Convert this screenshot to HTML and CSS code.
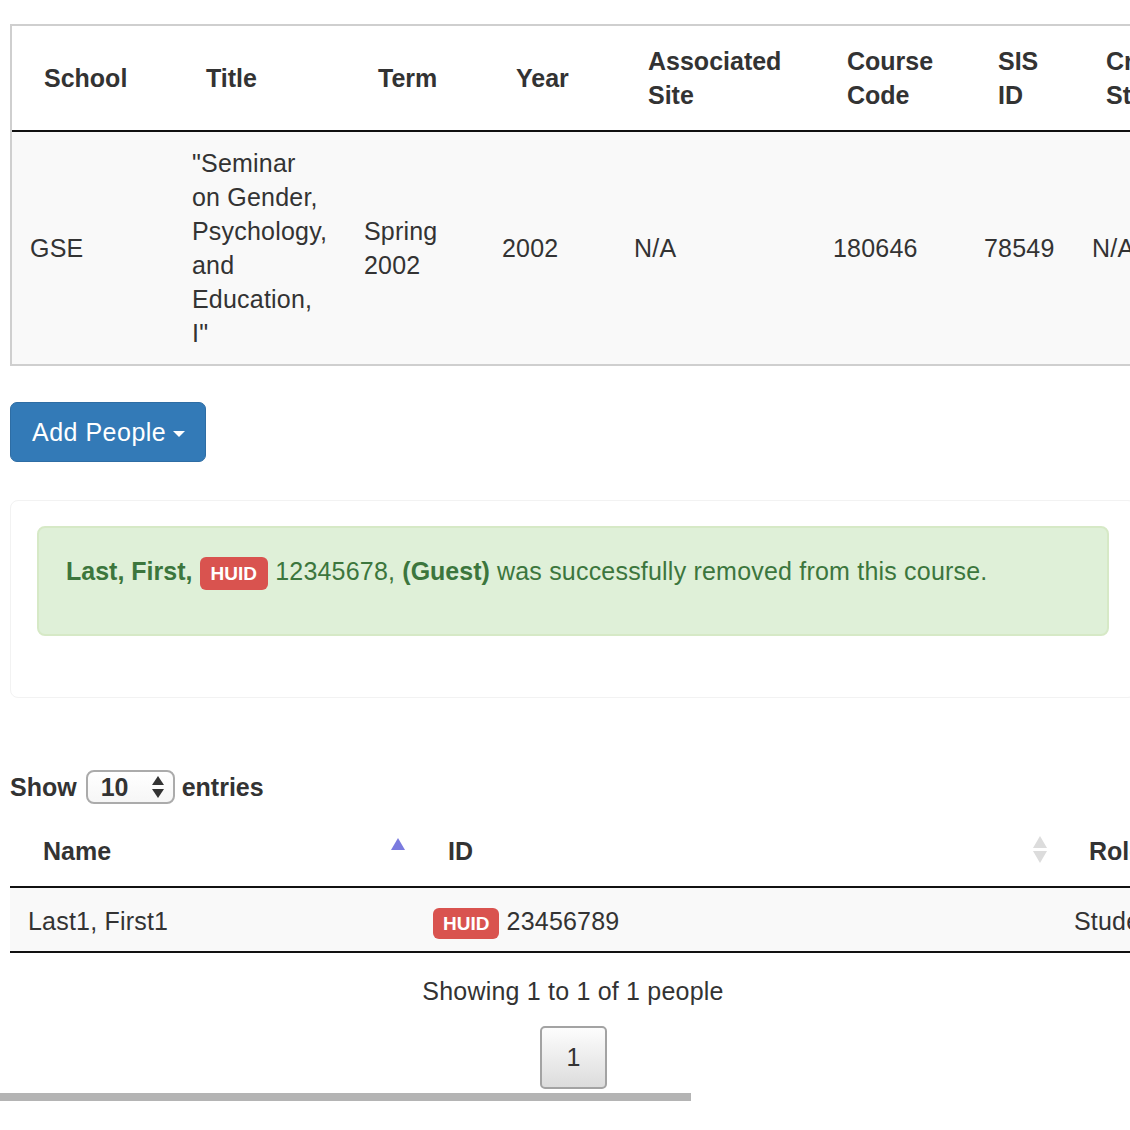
FILE: index.html
```html
<!DOCTYPE html>
<html lang="en">
<head>
<meta charset="utf-8">
<title>Course people</title>
<link rel="stylesheet" href="styles.css">
</head>
<body>
<div class="page">
  <table class="course-table">
    <colgroup>
      <col class="c-school"><col class="c-title"><col class="c-term"><col class="c-year"><col class="c-site"><col class="c-code"><col class="c-sis"><col class="c-cross">
    </colgroup>
    <thead>
      <tr>
        <th>School</th><th>Title</th><th>Term</th><th>Year</th><th>Associated Site</th><th>Course Code</th><th>SIS ID</th><th>Crosslist Status</th>
      </tr>
    </thead>
    <tbody>
      <tr>
        <td>GSE</td>
        <td class="title-cell">"Seminar on Gender, Psychology, and Education, I"</td>
        <td>Spring 2002</td>
        <td>2002</td>
        <td>N/A</td>
        <td>180646</td>
        <td>78549</td>
        <td>N/A</td>
      </tr>
    </tbody>
  </table>

  <div class="actions">
    <button class="btn-add" type="button">Add People <span class="caret"></span></button>
  </div>

  <div class="panel">
    <div class="alert">
      <p><b>Last, First,</b> <span class="badge">HUID</span> 12345678, <b>(Guest)</b> was successfully removed from this course.</p>
    </div>
  </div>

  <div class="length">
    <b>Show</b>
    <span class="select"><span class="select-val">10</span>
      <svg class="select-arrows" width="12" height="22" viewBox="0 0 12 22"><path d="M6 0 L12 9 H0 Z" fill="#333"/><path d="M0 13 H12 L6 22 Z" fill="#333"/></svg>
    </span>
    <b class="entries">entries</b>
  </div>

  <table class="people">
    <colgroup><col class="p-name"><col class="p-id"><col class="p-role"></colgroup>
    <thead>
      <tr>
        <th class="sortable">Name
          <svg class="sort-icon asc" width="14" height="12" viewBox="0 0 14 12"><path d="M7 0 L14 12 H0 Z" fill="#7b7bdf"/></svg>
        </th>
        <th class="sortable">ID
          <svg class="sort-icon both" width="14" height="28" viewBox="0 0 14 28"><path d="M7 0 L14 12 H0 Z" fill="#dcdcdc"/><path d="M0 15 H14 L7 27 Z" fill="#dcdcdc"/></svg>
        </th>
        <th>Role</th>
      </tr>
    </thead>
    <tbody>
      <tr>
        <td>Last1, First1</td>
        <td><span class="badge small">HUID</span> 23456789</td>
        <td>Student</td>
      </tr>
    </tbody>
  </table>

  <div class="info">Showing 1 to 1 of 1 people</div>
  <div class="paging"><span class="page-btn">1</span></div>
</div>
<div class="hscroll"></div>
</body>
</html>
```

FILE: styles.css
```css
html, body {
  margin: 0;
  padding: 0;
  overflow: hidden;
  background: #fff;
}

body {
  font-family: "Liberation Sans", Arial, sans-serif;
  font-size: 25px;
  line-height: 34px;
  letter-spacing: 0.2px;
  color: #333;
}

b, th {
  letter-spacing: 0;
}

.page {
  width: 1126px;
  padding: 24px 0 0 10px;
}

/* ---------- course table ---------- */
.course-table {
  border: 2px solid #cfcfcf;
  border-spacing: 0;
  table-layout: fixed;
  width: 1266px;
}

.c-school { width: 162px; }
.c-title { width: 172px; }
.c-term { width: 138px; }
.c-year { width: 132px; }
.c-site { width: 199px; }
.c-code { width: 151px; }
.c-sis { width: 108px; }
.c-cross { width: 200px; }

.course-table th {
  text-align: left;
  font-weight: bold;
  vertical-align: middle;
  padding: 18px 18px 18px 32px;
  border-bottom: 2px solid #111;
}

.course-table td {
  background: #f9f9f9;
  vertical-align: middle;
  padding: 14px 16px 14px 18px;
}

/* ---------- add people button ---------- */
.actions {
  margin-top: 36px;
}

.btn-add {
  display: inline-flex;
  align-items: center;
  height: 60px;
  width: 196px;
  box-sizing: border-box;
  padding: 0 0 0 21px;
  background: #337ab7;
  border: 1px solid #2e6da4;
  border-radius: 7px;
  color: #fff;
  font-family: inherit;
  font-size: 25px;
  line-height: 34px;
  letter-spacing: 0.5px;
}

.caret {
  display: inline-block;
  width: 0;
  height: 0;
  margin-left: 7px;
  margin-top: 4px;
  border-left: 6px solid transparent;
  border-right: 6px solid transparent;
  border-top: 6px solid #fff;
}

/* ---------- panel & alert ---------- */
.panel {
  margin-top: 38px;
  border: 1px solid #f2f2f2;
  border-radius: 8px;
  padding: 25px 26px 61px;
}

.alert {
  background: #dff0d8;
  border: 2px solid #d6e9c6;
  border-radius: 8px;
  color: #3c763d;
  padding: 26px 27px 26px;
}

.alert p {
  margin: 0 0 20px;
}

.badge {
  display: inline-block;
  position: relative;
  top: 3px;
  vertical-align: top;
  background: #d9534f;
  color: #fff;
  font-weight: bold;
  font-size: 19px;
  letter-spacing: 0;
  line-height: 33px;
  height: 33px;
  padding: 0 11px;
  border-radius: 6px;
}

.badge.small {
  top: 4px;
  line-height: 31px;
  height: 31px;
  padding: 0 10px;
}

/* ---------- length selector ---------- */
.length {
  margin-top: 71px;
  display: flex;
  align-items: center;
  gap: 9px;
  height: 36px;
}

.length .entries {
  margin-left: -2px;
}

.select {
  display: inline-flex;
  align-items: center;
  justify-content: space-between;
  box-sizing: border-box;
  width: 89px;
  height: 34px;
  border: 2px solid #ababab;
  border-radius: 8px;
  padding: 0 9px 0 13px;
  font-weight: bold;
  letter-spacing: 0;
  background: linear-gradient(#fff, #f6f6f6);
}

/* ---------- people table ---------- */
.people {
  margin-top: 12px;
  border-collapse: collapse;
  table-layout: fixed;
  width: 1346px;
}

.p-name { width: 405px; }
.p-id { width: 641px; }
.p-role { width: 300px; }

.people th {
  position: relative;
  text-align: left;
  font-weight: bold;
  padding: 17px 32px 18px 33px;
  border-bottom: 2px solid #111;
}

.people td {
  background: #f9f9f9;
  padding: 16px 18px 13px;
  border-bottom: 2px solid #111;
}

.sort-icon {
  position: absolute;
  right: 10px;
}

.sort-icon.asc {
  top: 21px;
}

.sort-icon.both {
  top: 19px;
  right: 9px;
}

/* ---------- info & paging ---------- */
.info {
  margin-top: 21px;
  text-align: center;
}

.paging {
  margin-top: 18px;
  text-align: center;
}

.page-btn {
  display: inline-block;
  box-sizing: border-box;
  width: 67px;
  height: 63px;
  line-height: 59px;
  border: 2px solid #a3a3a3;
  border-radius: 5px;
  background: linear-gradient(#fdfdfd, #dcdcdc);
  color: #333;
  margin-left: 1px;
}

.hscroll {
  position: absolute;
  left: 0;
  top: 1093px;
  width: 691px;
  height: 8px;
  background: #b4b4b4;
}
```
